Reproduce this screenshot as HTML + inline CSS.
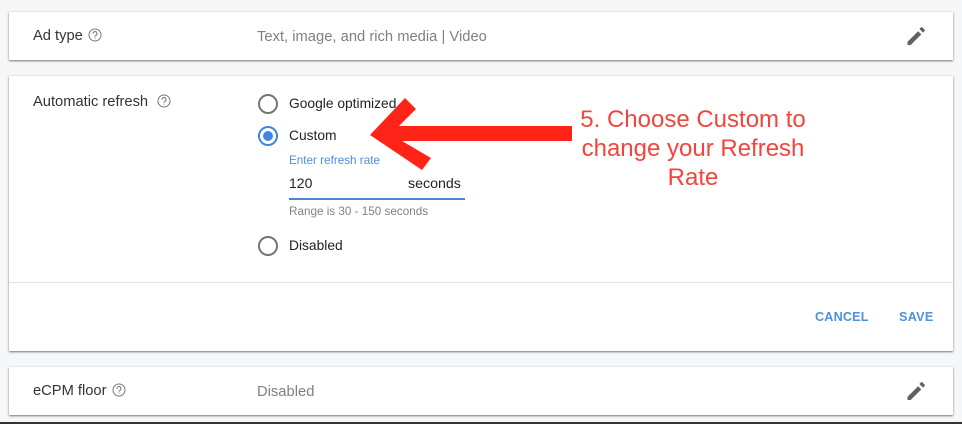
<!DOCTYPE html>
<html><head><meta charset="utf-8">
<style>
html,body{margin:0;padding:0;width:962px;height:424px;overflow:hidden;background:#f5f7f9;font-family:"Liberation Sans",sans-serif;}
.card{position:absolute;left:9px;width:944px;background:#fff;box-shadow:0 1px 2px rgba(0,0,0,.5),0 0 2px rgba(0,0,0,.08);}
.t{position:absolute;white-space:nowrap;line-height:16px;}
.lab{font-size:14.7px;color:#333;}
.val{font-size:14.75px;color:#808080;}
.opt{font-size:13.8px;color:#222;}
.radio{position:absolute;left:258px;width:20px;height:20px;box-sizing:border-box;border:2px solid #757575;border-radius:50%;}
svg{position:absolute;}
</style></head><body>
<div class="card" style="top:12px;height:48px"></div>
<div class="card" style="top:76px;height:275px"></div>
<div class="card" style="top:367px;height:48px"></div>
<div style="position:absolute;left:9px;width:944px;top:282px;height:1px;background:#e2e2e2"></div>
<div style="position:absolute;left:0;top:422px;width:962px;height:2px;background:#333"></div>

<div class="t lab" style="left:33px;top:28px">Ad type</div>
<svg style="left:87.5px;top:27.5px" width="14" height="14" viewBox="0 0 14 14"><circle cx="7" cy="7" r="6" fill="none" stroke="#777" stroke-width="1"/><path d="M5 5.6a2 2 0 1 1 3 1.7c-.7.4-1 .7-1 1.4" fill="none" stroke="#777" stroke-width="1"/><rect x="6.5" y="9.6" width="1" height="1" fill="#777"/></svg>
<div class="t val" style="left:257px;top:29px">Text, image, and rich media | Video</div>
<svg style="left:904px;top:24px" width="24" height="24" viewBox="0 0 24 24"><path fill="#616161" d="M3.500 17.800V21h3.200L17.300 10.400l-3.200-3.200L3.500 17.800zM20.600 7a1 1 0 0 0 0-1.400l-2.200-2.200a1 1 0 0 0-1.400 0l-1.600 1.600 3.600 3.600 1.600-1.600z"/></svg>

<div class="t lab" style="left:33px;top:94px">Automatic refresh</div>
<svg style="left:156.5px;top:93.5px" width="14" height="14" viewBox="0 0 14 14"><circle cx="7" cy="7" r="6" fill="none" stroke="#777" stroke-width="1"/><path d="M5 5.6a2 2 0 1 1 3 1.7c-.7.4-1 .7-1 1.4" fill="none" stroke="#777" stroke-width="1"/><rect x="6.5" y="9.6" width="1" height="1" fill="#777"/></svg>

<div class="radio" style="top:94px"></div>
<div class="t opt" style="left:289px;top:96px">Google optimized</div>
<div class="radio" style="top:126px;border-color:#4285e0"></div>
<div style="position:absolute;left:263px;top:131px;width:10px;height:10px;border-radius:50%;background:#4285e0"></div>
<div class="t opt" style="left:289px;top:128px">Custom</div>
<div class="t" style="left:289px;top:153px;font-size:11.7px;color:#4a8fe0">Enter refresh rate</div>
<div class="t" style="left:289px;top:175px;font-size:14px;color:#222">120</div>
<div class="t" style="left:408px;top:176px;font-size:14.2px;color:#222">seconds</div>
<div style="position:absolute;left:289px;top:198px;width:176px;height:2px;background:#4a86d0"></div>
<div class="t" style="left:289px;top:204px;font-size:11.7px;color:#808080">Range is 30 - 150 seconds</div>
<div class="radio" style="top:236px"></div>
<div class="t opt" style="left:289px;top:238px">Disabled</div>

<div class="t" style="left:815px;top:309px;font-size:12.6px;font-weight:bold;color:#5090dc;letter-spacing:.2px">CANCEL</div>
<div class="t" style="left:899px;top:309px;font-size:12.6px;font-weight:bold;color:#5090dc;letter-spacing:.3px">SAVE</div>

<div class="t lab" style="left:33px;top:383px">eCPM floor</div>
<svg style="left:112px;top:382.5px" width="14" height="14" viewBox="0 0 14 14"><circle cx="7" cy="7" r="6" fill="none" stroke="#777" stroke-width="1"/><path d="M5 5.6a2 2 0 1 1 3 1.7c-.7.4-1 .7-1 1.4" fill="none" stroke="#777" stroke-width="1"/><rect x="6.5" y="9.6" width="1" height="1" fill="#777"/></svg>
<div class="t val" style="left:257px;top:384px">Disabled</div>
<svg style="left:904px;top:379px" width="24" height="24" viewBox="0 0 24 24"><path fill="#616161" d="M3.500 17.800V21h3.200L17.300 10.400l-3.200-3.200L3.500 17.800zM20.600 7a1 1 0 0 0 0-1.400l-2.200-2.200a1 1 0 0 0-1.400 0l-1.600 1.600 3.600 3.600 1.600-1.600z"/></svg>

<svg style="left:0;top:0" width="962" height="424" viewBox="0 0 962 424"><path fill="#ff2318" d="M370 135 L405 98 L416 109 L399 126 L572 126 L572 141 L402 141 L431 158 L422 170 Z"/></svg>

<div class="t" style="left:563px;top:105px;width:260px;text-align:center;font-size:24px;line-height:29px;color:#f2453d;white-space:normal">5. Choose Custom to<br>change your Refresh<br>Rate</div>
</body></html>
